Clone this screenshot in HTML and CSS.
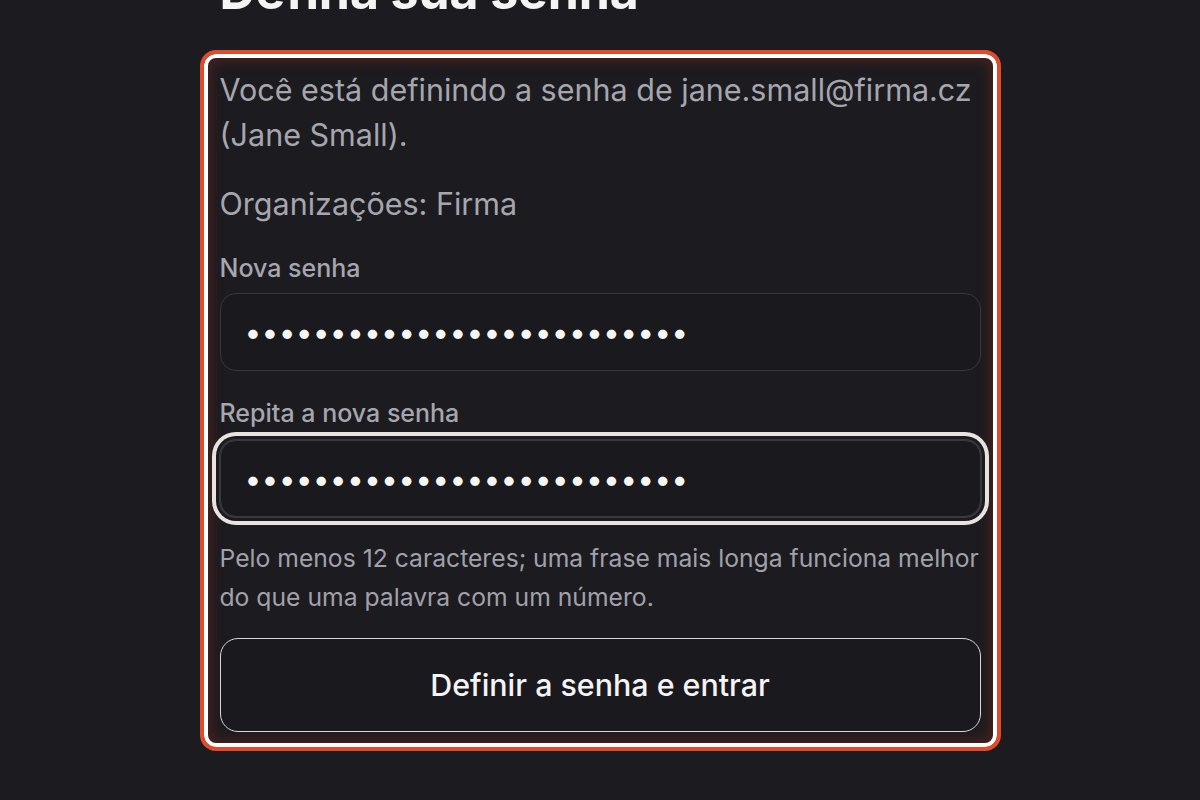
FILE: index.html
```html
<!DOCTYPE html>
<html lang="pt-BR">
<head>
<meta charset="utf-8">
<title>Defina sua senha</title>
<link rel="stylesheet" href="styles.css">
</head>
<body>
<main class="page">
  <h1 class="title">Defina sua senha</h1>
  <form class="frame">
    <p class="intro">Você está definindo a senha de jane.small@firma.cz (Jane Small).</p>
    <p class="intro org">Organizações: Firma</p>
    <label class="field">
      <span class="label">Nova senha</span>
      <input class="input" type="password" value="abcdefghijklmnopqrstuvwxyz">
    </label>
    <label class="field field-second">
      <span class="label">Repita a nova senha</span>
      <input class="input input-focus" type="password" value="abcdefghijklmnopqrstuvwxyz">
    </label>
    <p class="hint">Pelo menos 12 caracteres; uma frase mais longa funciona melhor do que uma palavra com um número.</p>
    <button class="submit" type="button">Definir a senha e entrar</button>
  </form>
</main>
</body>
</html>
```
FILE: styles.css
```css
* { box-sizing: border-box; }
html, body { margin: 0; padding: 0; }
body {
  background: #1c1b20;
  font-family: Inter, "Noto Sans", sans-serif;
  color: #f4f4f5;
  height: 800px;
  overflow: hidden;
}
.page {
  width: 761px;
  margin: 0 auto;
}
.title {
  margin: -33px 0 0 0;
  font-size: 50px;
  line-height: 48px;
  font-weight: 700;
  color: #f4f4f5;
  letter-spacing: -0.1px;
}
.frame {
  margin: 35px -20px 0 -20px;
  border: 4px solid #e24a2c;
  border-radius: 16px;
  box-shadow: inset 0 0 0 4px #ffffff, inset 0 0 14px 6px rgba(150, 45, 30, 0.4);
  padding: 13px 16px 15px 16px;
  display: flex;
  flex-direction: column;
}
.intro {
  margin: 0;
  font-size: 30.5px;
  line-height: 45px;
  color: #a6a6ae;
}
.org { margin-top: 24px; }
.field {
  display: flex;
  flex-direction: column;
  margin-top: 24px;
}
.field-second { margin-top: 24px; }
.label {
  font-size: 25px;
  line-height: 36px;
  font-weight: 500;
  color: #a6a6ae;
}
.input {
  margin-top: 7px;
  height: 78px;
  width: 100%;
  border: 1px solid #37363c;
  border-radius: 16px;
  background: #1a191e;
  color: #f7f5f2;
  font-family: Inter, sans-serif;
  font-size: 30px;
  letter-spacing: 0.2px;
  padding: 0 24px;
  outline: none;
}
.input-focus {
  margin-top: 9px;
  height: 77px;
  border-color: #3a393f;
  box-shadow: 0 0 0 1px #3a393f, 0 0 0 4px #1c1b20, 0 0 0 8px #e8e3df;
}
.hint {
  margin: 22px 0 0 0;
  font-size: 24.7px;
  line-height: 38.5px;
  color: #a1a1aa;
}
.submit {
  margin-top: 22px;
  height: 94px;
  width: 100%;
  border: 1.5px solid #d8d8dc;
  border-radius: 18px;
  background: #1a191e;
  color: #f4f4f5;
  font-family: Inter, sans-serif;
  font-size: 30.4px;
  font-weight: 500;
}
```
